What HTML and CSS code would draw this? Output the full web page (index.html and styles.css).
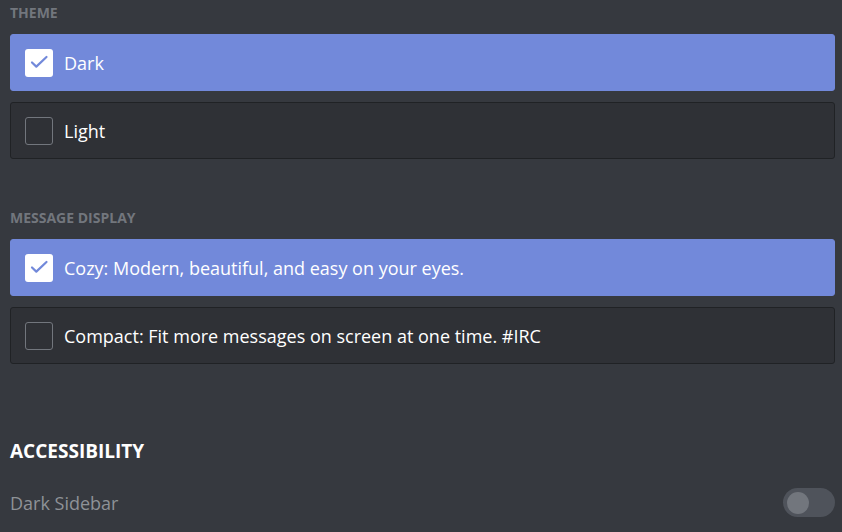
FILE: index.html
```html
<!DOCTYPE html>
<html>
<head>
<meta charset="utf-8">
<link rel="stylesheet" href="styles.css">
</head>
<body>
<div class="page">
  <div class="section-title first">Theme</div>
  <div class="options">
    <div class="option selected">
      <span class="box"><svg viewBox="0 0 28 28" width="28" height="28"><path d="M7 13.5 L11.3 17.6 L21.5 8" fill="none" stroke="#7289da" stroke-width="2.2" stroke-linecap="round" stroke-linejoin="round"/></svg></span>
      <span class="label">Dark</span>
    </div>
    <div class="option">
      <span class="box"></span>
      <span class="label">Light</span>
    </div>
  </div>

  <div class="section-title second">Message Display</div>
  <div class="options">
    <div class="option selected">
      <span class="box"><svg viewBox="0 0 28 28" width="28" height="28"><path d="M7 13.5 L11.3 17.6 L21.5 8" fill="none" stroke="#7289da" stroke-width="2.2" stroke-linecap="round" stroke-linejoin="round"/></svg></span>
      <span class="label">Cozy: Modern, beautiful, and easy on your eyes.</span>
    </div>
    <div class="option">
      <span class="box"></span>
      <span class="label">Compact: Fit more messages on screen at one time. #IRC</span>
    </div>
  </div>

  <div class="big-title">Accessibility</div>
  <div class="switch-row">
    <span class="switch-label">Dark Sidebar</span>
    <span class="switch"><span class="knob"></span></span>
  </div>
</div>
</body>
</html>
```
FILE: styles.css
```css
html, body {
  margin: 0;
  padding: 0;
  background: #36393f;
  height: 100%;
  overflow: hidden;
}
.page {
  padding: 5px 7px 0 10px;
  font-family: "Open Sans", "Noto Sans", sans-serif;
}
.section-title {
  font-size: 14px;
  font-weight: 700;
  line-height: 16px;
  height: 16px;
  text-transform: uppercase;
  color: #72767d;
  margin-bottom: 13px;
}
.section-title.second {
  margin-top: 51px;
}
.options {
  display: flex;
  flex-direction: column;
  gap: 11px;
}
.option {
  display: flex;
  align-items: center;
  height: 57px;
  box-sizing: border-box;
  padding-left: 14px;
  border: 1px solid #202225;
  border-radius: 3px;
  background: #2f3136;
}
.option.selected {
  background: #7289da;
  border-color: #7289da;
}
.box {
  width: 28px;
  height: 28px;
  box-sizing: border-box;
  border: 1px solid #72767d;
  border-radius: 3px;
  display: flex;
  flex: none;
  margin-right: 11px;
}
.selected .box {
  background: #ffffff;
  border: none;
}
.box svg {
  display: block;
}
.label {
  color: #ffffff;
  font-size: 18px;
  line-height: 22px;
}
.big-title {
  margin-top: 75px;
  font-size: 19px;
  line-height: 24px;
  font-weight: 700;
  text-transform: uppercase;
  color: #ffffff;
}
.switch-row {
  margin-top: 25px;
  display: flex;
  align-items: center;
  justify-content: space-between;
  height: 29px;
}
.switch-label {
  font-size: 18px;
  color: #8e9297;
}
.switch {
  width: 52px;
  height: 29px;
  border-radius: 15px;
  background: #4f535b;
  display: flex;
  align-items: center;
  padding-left: 4px;
  box-sizing: border-box;
}
.knob {
  width: 22px;
  height: 22px;
  border-radius: 50%;
  background: #72767d;
}
```
